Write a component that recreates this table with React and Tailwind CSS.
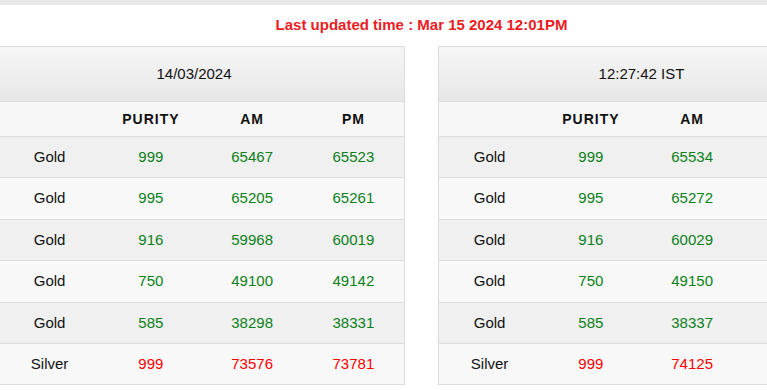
import React from 'react';

const dayRates = [
  { metal: 'Gold', purity: '999', am: '65467', pm: '65523' },
  { metal: 'Gold', purity: '995', am: '65205', pm: '65261' },
  { metal: 'Gold', purity: '916', am: '59968', pm: '60019' },
  { metal: 'Gold', purity: '750', am: '49100', pm: '49142' },
  { metal: 'Gold', purity: '585', am: '38298', pm: '38331' },
  { metal: 'Silver', purity: '999', am: '73576', pm: '73781' },
];

const liveRates = [
  { metal: 'Gold', purity: '999', am: '65534', pm: '' },
  { metal: 'Gold', purity: '995', am: '65272', pm: '' },
  { metal: 'Gold', purity: '916', am: '60029', pm: '' },
  { metal: 'Gold', purity: '750', am: '49150', pm: '' },
  { metal: 'Gold', purity: '585', am: '38337', pm: '' },
  { metal: 'Silver', purity: '999', am: '74125', pm: '' },
];

function RateTable({ title, rows, showPm, titleClass }) {
  return (
    <div className="w-[407px] shrink-0 border border-[#dcdcdc] border-b-0">
      <div className={'h-[55px] flex items-center justify-center bg-gradient-to-b from-[#f6f6f6] to-[#e7e7e7] border-b border-[#dcdcdc] text-[15px] text-[#111] ' + titleClass}>
        {title}
      </div>
      <div className="grid grid-cols-4 h-[35px] items-center bg-[#f7f7f7] border-b border-[#dcdcdc] text-[14px] font-bold tracking-[1px] text-[#111] text-center">
        <div></div>
        <div>PURITY</div>
        <div>AM</div>
        <div>{showPm ? 'PM' : ''}</div>
      </div>
      {rows.map((r, i) => {
        const tone = r.metal === 'Silver' ? 'text-[#ff0000]' : 'text-[#0b7f1a]';
        return (
          <div
            key={i}
            className={
              'grid grid-cols-4 h-[41.4px] items-center border-b border-[#dcdcdc] text-[15px] text-center ' +
              (i % 2 === 0 ? 'bg-[#f0f0f0]' : 'bg-[#f8f8f8]')
            }
          >
            <div className="text-[#111]">{r.metal}</div>
            <div className={tone}>{r.purity}</div>
            <div className={tone}>{r.am}</div>
            <div className={tone}>{r.pm}</div>
          </div>
        );
      })}
    </div>
  );
}

export default function App() {
  return (
    <div className="w-[767px] h-[390px] overflow-hidden bg-white" style={{ fontFamily: '"Liberation Sans", Arial, sans-serif' }}>
      <div className="h-[5px] bg-[#e8e8e8]"></div>
      <div className="w-[847px] -ml-[2px]">
        <div className="h-[41px] flex items-center justify-center text-[15px] font-bold text-[#ec1c24]">
          Last updated time : Mar 15 2024 12:01PM
        </div>
        <div className="flex gap-[33px]">
          <RateTable title="14/03/2024" rows={dayRates} showPm titleClass="pr-[15px]" />
          <RateTable title="12:27:42 IST" rows={liveRates} showPm={false} titleClass="" />
        </div>
      </div>
    </div>
  );
}
